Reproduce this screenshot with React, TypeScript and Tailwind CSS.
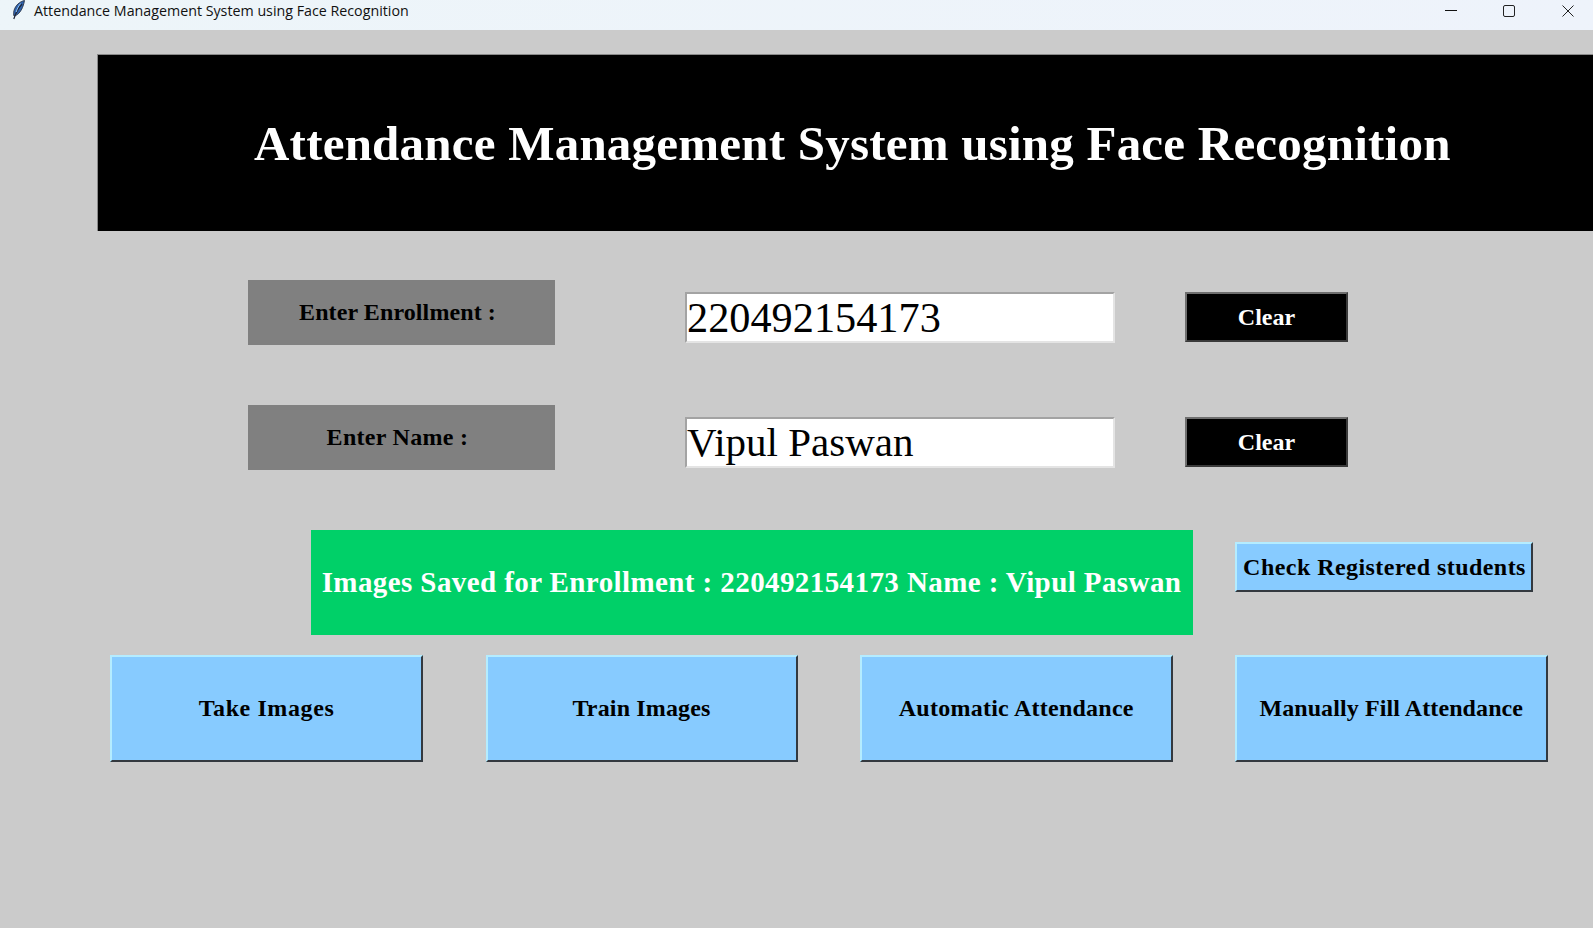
const serif = "font-['Liberation_Serif',serif]";

function RaisedButton({ label, className }: { label: string; className: string }) {
  return (
    <button
      className={`flex items-center justify-center bg-[#87cbff] border-2 border-t-[#b4ecff] border-l-[#b4ecff] border-r-[#33393f] border-b-[#33393f] font-['Liberation_Serif',serif] font-bold text-black ${className}`}
    >
      {label}
    </button>
  );
}

function FormRow({ label, value, className, inputText, labelText }: { label: string; value: string; className: string; inputText: string; labelText: string }) {
  return (
    <div className={`flex items-start pl-[248px] ${className}`}>
      <div className={`flex h-[65px] w-[307px] items-center justify-center pr-[8px] pb-[1px] bg-[#808080] text-[24px] font-bold text-black font-['Liberation_Serif',serif] ${labelText}`}>
        {label}
      </div>
      <input
        readOnly
        value={value}
        className={`ml-[130px] mt-[12px] h-[51px] w-[430px] bg-white border-2 border-t-[#a3a3a3] border-l-[#a3a3a3] border-r-[#e4e4e4] border-b-[#e4e4e4] pt-[1px] text-black outline-none font-['Liberation_Serif',serif] ${inputText}`}
      />
      <button className="ml-[70px] mt-[12px] flex h-[50px] w-[163px] items-center justify-center bg-black border-2 border-t-[#6f6f6f] border-l-[#6f6f6f] border-r-[#3a3a3a] border-b-[#3a3a3a] text-[24px] font-bold text-white font-['Liberation_Serif',serif]">
        Clear
      </button>
    </div>
  );
}

export default function App() {
  return (
    <div className="flex h-[928px] w-[1593px] flex-col overflow-hidden bg-[#cbcbcb]">
      <div className="flex h-[30px] shrink-0 items-center bg-gradient-to-r from-[#edf5f9] to-[#eef3fb]">
        <svg className="ml-[11px] mt-[-10px]" width="15" height="20" viewBox="0 0 15 20" fill="none">
          <path d="M13.5 0.5C9 1.5 4.5 5 3 10.5C2.4 13 2.6 15 3 16C6.5 15.5 9.5 12 11.5 7.5C12.5 5 13.2 2.5 13.5 0.5Z" fill="#2f62ad" stroke="#2a3446" strokeWidth="0.9" />
          <path d="M11 4C8 7.5 5 12 2.8 19" stroke="#20283a" strokeWidth="1.2" />
          <path d="M9.5 3.5C7.5 6 6 9 5.2 12" stroke="#8fc0ee" strokeWidth="1" />
        </svg>
        <span className="ml-[8px] mt-[-8px] whitespace-nowrap text-[14.25px] text-[#111] font-['Open_Sans',sans-serif]">
          Attendance Management System using Face Recognition
        </span>
        <div className="ml-auto flex items-center mt-[-9px]">
          <svg width="12" height="12" viewBox="0 0 12 12" className="mr-[46px]"><path d="M0 5.5H12" stroke="#111" strokeWidth="1" /></svg>
          <svg width="12" height="12" viewBox="0 0 12 12" className="mr-[47px]"><rect x="0.5" y="0.5" width="11" height="11" rx="1.5" fill="none" stroke="#222" strokeWidth="1" /></svg>
          <svg width="12" height="12" viewBox="0 0 12 12" className="mr-[19px]"><path d="M0.5 0.5L11.5 11.5M11.5 0.5L0.5 11.5" stroke="#222" strokeWidth="1" /></svg>
        </div>
      </div>

      <div className={`ml-[97px] mt-[24px] flex h-[177px] shrink-0 items-center bg-black pl-[156px] pt-[2px] border-t border-l border-[#8a8a8a] ${serif}`}>
        <h1 className="whitespace-nowrap text-[49px] font-bold tracking-[0.22px] text-white">
          Attendance Management System using Face Recognition
        </h1>
      </div>

      <FormRow label="Enter Enrollment :" value="220492154173" className="mt-[49px]" inputText="text-[42.3px]" labelText="tracking-[0.1px]" />
      <FormRow label="Enter Name :" value="Vipul Paswan" className="mt-[60px]" inputText="text-[41px]" labelText="tracking-[0.3px]" />

      <div className="mt-[60px] flex items-start pl-[311px]">
        <div className="flex h-[105px] w-[882px] items-center justify-center pr-[1px] bg-[#00d068] text-[29px] font-bold tracking-[0.41px] text-white whitespace-nowrap font-['Liberation_Serif',serif]">
          Images Saved for Enrollment : 220492154173 Name : Vipul Paswan
        </div>
        <RaisedButton label="Check Registered students" className="ml-[42px] mt-[12px] h-[50px] w-[298px] pl-[1px] text-[24px] tracking-[0.45px] whitespace-nowrap" />
      </div>

      <div className="mt-[20px] flex gap-[62.5px] pl-[110px]">
        <RaisedButton label="Take Images" className="h-[107px] w-[313px] pb-[2px] text-[24px] tracking-[0.6px]" />
        <RaisedButton label="Train Images" className="h-[107px] w-[312px] pb-[2px] text-[24px] tracking-[0.15px]" />
        <RaisedButton label="Automatic Attendance" className="h-[107px] w-[312.5px] pb-[2px] text-[24px] tracking-[0.25px]" />
        <RaisedButton label="Manually Fill Attendance" className="h-[107px] w-[312.5px] pb-[2px] text-[24px] tracking-[0.1px]" />
      </div>
    </div>
  );
}
